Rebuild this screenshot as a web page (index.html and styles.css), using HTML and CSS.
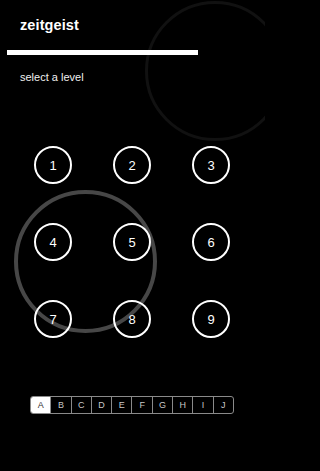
FILE: index.html
```html
<!DOCTYPE html>
<html lang="en">
<head>
<meta charset="utf-8">
<title>zeitgeist</title>
<link rel="stylesheet" href="styles.css">
</head>
<body>
<div class="screen">
  <div class="ring ring-faint"></div>
  <div class="ring ring-gray"></div>
  <header class="header">
    <h1 class="title">zeitgeist</h1>
    <div class="progress"></div>
    <p class="subtitle">select a level</p>
  </header>
  <main class="levels">
    <button class="level">1</button>
    <button class="level">2</button>
    <button class="level">3</button>
    <button class="level">4</button>
    <button class="level">5</button>
    <button class="level">6</button>
    <button class="level">7</button>
    <button class="level">8</button>
    <button class="level">9</button>
  </main>
  <nav class="segments">
    <span class="seg active">A</span>
    <span class="seg">B</span>
    <span class="seg">C</span>
    <span class="seg">D</span>
    <span class="seg">E</span>
    <span class="seg">F</span>
    <span class="seg">G</span>
    <span class="seg">H</span>
    <span class="seg">I</span>
    <span class="seg">J</span>
  </nav>
</div>
</body>
</html>
```
FILE: styles.css
```css
html, body {
  margin: 0;
  padding: 0;
  background: #000;
}
.screen {
  position: relative;
  width: 265px;
  height: 471px;
  overflow: hidden;
  background: #000;
  font-family: "Liberation Sans", Arial, sans-serif;
  color: #fff;
}
.ring {
  position: absolute;
  border-radius: 50%;
  box-sizing: border-box;
  z-index: 0;
}
.ring-faint {
  left: 145px;
  top: 1px;
  width: 140px;
  height: 140px;
  border: 3px solid #111;
}
.ring-gray {
  left: 14px;
  top: 190px;
  width: 143px;
  height: 143px;
  border: 4.5px solid #474747;
}
.header {
  position: relative;
  z-index: 1;
  padding-top: 16px;
}
.title {
  margin: 0 0 0 20px;
  font-size: 14.5px;
  font-weight: bold;
  line-height: 18px;
  letter-spacing: 0.1px;
}
.progress {
  margin: 16px 0 0 7px;
  width: 191px;
  height: 5px;
  background: #fff;
}
.subtitle {
  margin: 15px 0 0 20px;
  font-size: 11px;
  line-height: 14px;
  color: #f0f0f0;
}
.levels {
  position: relative;
  z-index: 1;
  display: grid;
  grid-template-columns: repeat(3, 38px);
  column-gap: 41px;
  row-gap: 39px;
  margin: 62px 0 0 34px;
}
.level {
  width: 38px;
  height: 38px;
  box-sizing: border-box;
  border: 2px solid #fff;
  border-radius: 50%;
  background: transparent;
  color: #fff;
  font-family: "Liberation Sans", Arial, sans-serif;
  font-size: 13px;
  padding: 0;
  display: flex;
  align-items: center;
  justify-content: center;
}
.segments {
  position: relative;
  z-index: 1;
  display: flex;
  margin: 58px 0 0 30px;
  width: 204px;
  height: 18px;
  box-sizing: border-box;
  border: 1px solid #8a8a8a;
  border-radius: 3px;
  overflow: hidden;
}
.seg {
  flex: 1;
  display: flex;
  align-items: center;
  justify-content: center;
  font-size: 9px;
  color: #c8c8c8;
  border-left: 1px solid #8a8a8a;
}
.seg:first-child {
  border-left: none;
}
.seg.active {
  background: #fff;
  color: #333;
}
```
